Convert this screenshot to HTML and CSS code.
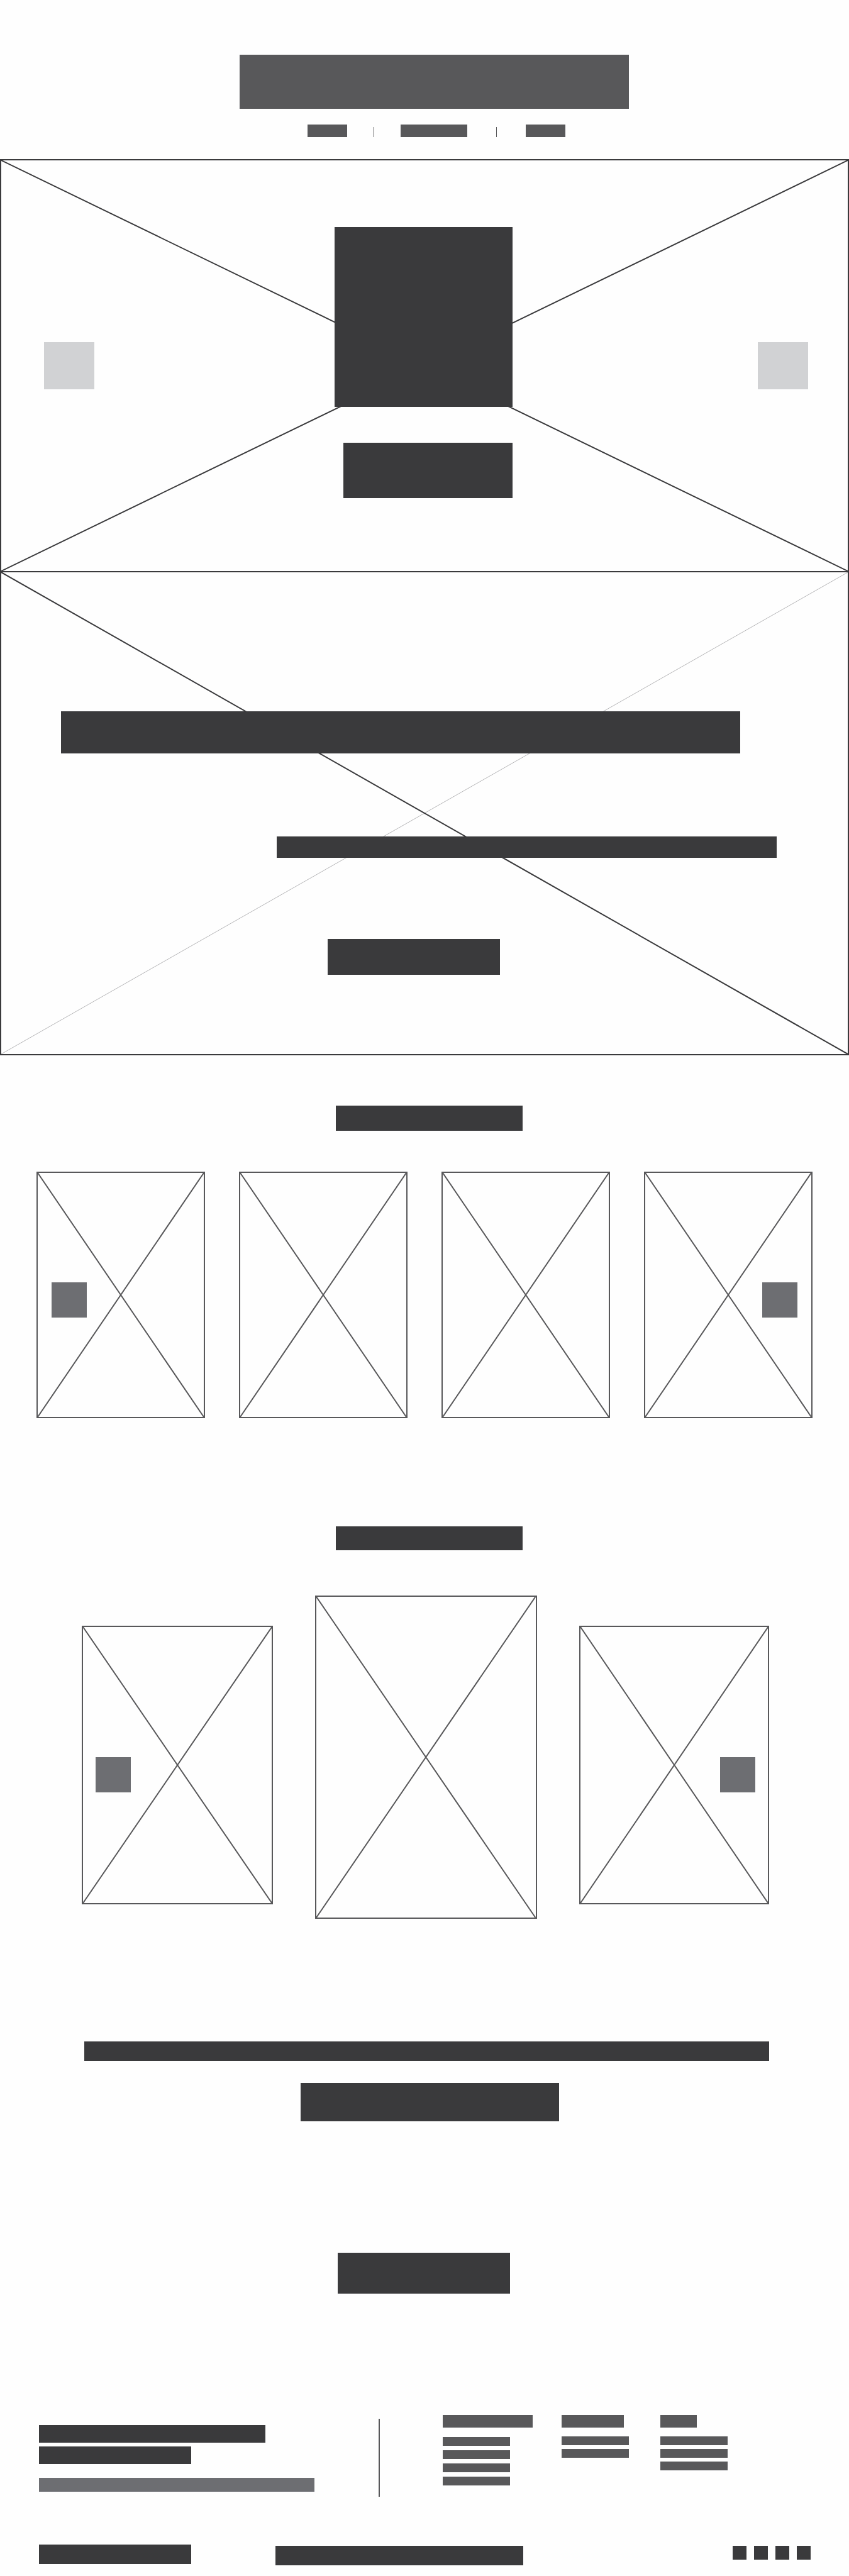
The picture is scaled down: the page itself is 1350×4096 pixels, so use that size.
FILE: index.html
```html
<!DOCTYPE html>
<html lang="en">
<head>
<meta charset="utf-8">
<meta name="viewport" content="width=device-width, initial-scale=1">
<title>Home page wireframe</title>
<link rel="stylesheet" href="styles.css">
</head>
<body>
<header class="site-header">
  <a class="logo" href="#" aria-label="Home"></a>
  <nav class="site-nav" aria-label="Main">
    <a class="nav-link" href="#" aria-label="Shop"></a>
    <span class="nav-rule"></span>
    <a class="nav-link nav-link-wide" href="#" aria-label="Collections"></a>
    <span class="nav-rule nav-rule-last"></span>
    <a class="nav-link" href="#" aria-label="About"></a>
  </nav>
</header>

<main>
  <section class="hero">
    <svg class="cross" viewBox="0 0 100 100" preserveAspectRatio="none" aria-hidden="true"><path d="M0 0L100 100M100 0L0 100"/></svg>
    <button class="arrow arrow-hero" type="button" aria-label="Previous"></button>
    <div class="hero-center">
      <div class="hero-mark"></div>
      <button class="hero-action" type="button" aria-label="Shop now"></button>
    </div>
    <button class="arrow arrow-hero" type="button" aria-label="Next"></button>
  </section>

  <section class="feature">
    <svg class="cross" viewBox="0 0 100 100" preserveAspectRatio="none" aria-hidden="true"><path class="faint" d="M100 0L0 100"/><path d="M0 0L100 100"/></svg>
    <div class="feature-title"></div>
    <div class="feature-text"></div>
    <button class="feature-action" type="button" aria-label="Read more"></button>
  </section>

  <section class="products">
    <div class="section-title"></div>
    <div class="product-row">
      <article class="card product">
        <svg class="cross" viewBox="0 0 100 100" preserveAspectRatio="none" aria-hidden="true"><path d="M0 0L100 100M100 0L0 100"/></svg>
        <button class="arrow" type="button" aria-label="Previous"></button>
      </article>
      <article class="card product">
        <svg class="cross" viewBox="0 0 100 100" preserveAspectRatio="none" aria-hidden="true"><path d="M0 0L100 100M100 0L0 100"/></svg>
      </article>
      <article class="card product">
        <svg class="cross" viewBox="0 0 100 100" preserveAspectRatio="none" aria-hidden="true"><path d="M0 0L100 100M100 0L0 100"/></svg>
      </article>
      <article class="card product card-last">
        <svg class="cross" viewBox="0 0 100 100" preserveAspectRatio="none" aria-hidden="true"><path d="M0 0L100 100M100 0L0 100"/></svg>
        <button class="arrow" type="button" aria-label="Next"></button>
      </article>
    </div>
  </section>

  <section class="gallery">
    <div class="section-title"></div>
    <div class="gallery-row">
      <article class="card slide">
        <svg class="cross" viewBox="0 0 100 100" preserveAspectRatio="none" aria-hidden="true"><path d="M0 0L100 100M100 0L0 100"/></svg>
        <button class="arrow" type="button" aria-label="Previous"></button>
      </article>
      <article class="card slide slide-main">
        <svg class="cross" viewBox="0 0 100 100" preserveAspectRatio="none" aria-hidden="true"><path d="M0 0L100 100M100 0L0 100"/></svg>
      </article>
      <article class="card slide card-last">
        <svg class="cross" viewBox="0 0 100 100" preserveAspectRatio="none" aria-hidden="true"><path d="M0 0L100 100M100 0L0 100"/></svg>
        <button class="arrow" type="button" aria-label="Next"></button>
      </article>
    </div>
  </section>

  <section class="signup">
    <div class="signup-title"></div>
    <div class="signup-text"></div>
    <button class="signup-action" type="button" aria-label="Sign up"></button>
  </section>
</main>

<footer class="site-footer">
  <div class="footer-top">
    <div class="footer-about">
      <div class="about-line"></div>
      <div class="about-line about-line-short"></div>
      <div class="about-note"></div>
    </div>
    <div class="footer-columns">
      <div class="footer-column">
        <div class="column-title"></div>
        <a class="column-link" href="#" aria-label="Link 1"></a>
        <a class="column-link" href="#" aria-label="Link 2"></a>
        <a class="column-link" href="#" aria-label="Link 3"></a>
        <a class="column-link" href="#" aria-label="Link 4"></a>
      </div>
      <div class="footer-column footer-column-tight">
        <div class="column-title title-medium"></div>
        <a class="column-link" href="#" aria-label="Link 1"></a>
        <a class="column-link" href="#" aria-label="Link 2"></a>
      </div>
      <div class="footer-column footer-column-tight">
        <div class="column-title title-short"></div>
        <a class="column-link" href="#" aria-label="Link 1"></a>
        <a class="column-link" href="#" aria-label="Link 2"></a>
        <a class="column-link" href="#" aria-label="Link 3"></a>
      </div>
    </div>
  </div>
  <div class="footer-bottom">
    <div class="legal"></div>
    <div class="legal legal-wide"></div>
    <div class="social">
      <a class="social-link" href="#" aria-label="Social 1"></a>
      <a class="social-link" href="#" aria-label="Social 2"></a>
      <a class="social-link" href="#" aria-label="Social 3"></a>
      <a class="social-link" href="#" aria-label="Social 4"></a>
    </div>
  </div>
</footer>
</body>
</html>
```
FILE: styles.css
```css
:root {
  --dark: #3a3a3c;
  --mid: #58585a;
  --soft: #6d6e72;
  --pale: #d1d2d4;
}

*, *::before, *::after { box-sizing: border-box; }

body {
  margin: 0;
  background: #fefefe;
  font-family: "Liberation Sans", Arial, sans-serif;
}

a { display: block; }

button {
  display: block;
  margin: 0;
  padding: 0;
  border: 0;
  background: var(--dark);
  cursor: pointer;
}

/* Header */
.site-header {
  display: flex;
  flex-direction: column;
  align-items: center;
  gap: 25px;
  padding: 87px 0 35px 30px;
}
.logo { width: 619px; height: 86px; background: var(--mid); }
.site-nav {
  display: flex;
  align-items: flex-end;
  gap: 42px;
  padding-left: 7px;
}
.nav-link { width: 63px; height: 20px; background: var(--mid); }
.nav-link-wide { width: 106px; margin-right: 4px; }
.nav-rule { width: 1px; height: 16px; background: var(--mid); }
.nav-rule-last { margin-right: 4px; }

/* Placeholder crosses drawn behind the content */
.cross {
  position: absolute;
  inset: 0;
  width: 100%;
  height: 100%;
  z-index: -1;
}
.cross path {
  fill: none;
  stroke: var(--dark);
  stroke-width: 2;
  vector-effect: non-scaling-stroke;
}
.cross .faint { stroke: #b5b5b7; stroke-width: 1; }
.hero, .feature, .card { position: relative; isolation: isolate; }

/* Hero */
.hero {
  display: flex;
  justify-content: space-between;
  align-items: flex-start;
  padding: 106px 63px 116px 68px;
  border: 2px solid var(--dark);
  border-bottom: 0;
}
.hero-center {
  display: flex;
  flex-direction: column;
  align-items: flex-end;
  gap: 57px;
  margin-right: 8px;
}
.hero-mark { width: 283px; height: 286px; background: var(--dark); }
.hero-action { width: 269px; height: 88px; }
.arrow { width: 56px; height: 56px; background: var(--soft); }
.arrow-hero { width: 80px; height: 75px; margin-top: 183px; background: var(--pale); }

/* Feature */
.feature {
  display: flex;
  flex-direction: column;
  padding: 221px 113px 126px 95px;
  border: 2px solid var(--dark);
}
.feature-title { height: 67px; margin-right: 58px; background: var(--dark); }
.feature-text { height: 34px; margin: 132px 0 129px 343px; background: var(--dark); }
.feature-action { width: 274px; height: 57px; margin-left: 424px; }

/* Products */
.section-title { width: 297px; height: 40px; background: var(--dark); }
.card { display: flex; border: 2px solid var(--mid); }
.card .cross path { stroke: var(--mid); }
.card-last { justify-content: flex-end; }
.products { padding: 80px 58px 0; }
.products .section-title { margin: 0 auto; translate: none; }
.products, .gallery { display: flex; flex-direction: column; }
.products .section-title, .gallery .section-title { align-self: center; margin: 0 0 0 14px; }
.product-row {
  display: grid;
  grid-template-columns: repeat(4, 1fr);
  gap: 54px;
  margin-top: 65px;
}
.product { min-height: 392px; padding: 174px 22px 158px; }

/* Gallery */
.gallery { padding: 172px 127px 0 130px; }
.gallery .section-title { height: 38px; margin-left: 12px; }
.gallery-row {
  display: grid;
  grid-template-columns: 304fr 352fr 302fr;
  gap: 67px;
  align-items: start;
  margin-top: 72px;
}
.slide { min-height: 443px; margin-top: 48px; padding: 207px 20px 0; }
.slide-main { min-height: 514px; margin-top: 0; }

/* Sign-up */
.signup {
  display: flex;
  flex-direction: column;
  align-items: center;
  padding: 195px 127px 193px 134px;
}
.signup-title { width: 100%; height: 31px; background: var(--dark); }
.signup-text { width: 411px; height: 61px; margin: 35px 0 0 10px; background: var(--dark); }
.signup-action { width: 274px; height: 65px; margin: 209px 9px 0 0; }

/* Footer */
.site-footer { padding: 0 61px 17px 62px; }
.footer-top { display: flex; align-items: flex-start; }
.footer-about {
  display: flex;
  flex-direction: column;
  flex: 0 0 542px;
  gap: 6px;
  min-height: 124px;
  margin-top: 6px;
  padding-top: 10px;
  border-right: 2px solid var(--mid);
}
.about-line { width: 360px; height: 28px; background: var(--dark); }
.about-line-short { width: 242px; }
.about-note { width: 438px; height: 22px; margin-top: 16px; background: var(--soft); }
.footer-columns {
  display: grid;
  grid-template-columns: 143px 111px 107px;
  gap: 46px;
  margin-left: 100px;
}
.footer-column { display: flex; flex-direction: column; gap: 7px; }
.footer-column-tight { gap: 6px; }
.column-title { width: 143px; height: 20px; margin-bottom: 8px; background: var(--mid); }
.title-medium { width: 99px; }
.title-short { width: 58px; }
.column-link { width: 107px; height: 14px; background: var(--mid); }
.footer-bottom {
  display: flex;
  align-items: flex-start;
  margin-top: 76px;
}
.legal { width: 242px; height: 31px; background: var(--dark); }
.legal-wide { width: 394px; margin: 2px 0 0 134px; }
.social { display: flex; gap: 12px; margin: 2px 0 0 auto; }
.social-link { width: 22px; height: 22px; background: var(--dark); }
```
